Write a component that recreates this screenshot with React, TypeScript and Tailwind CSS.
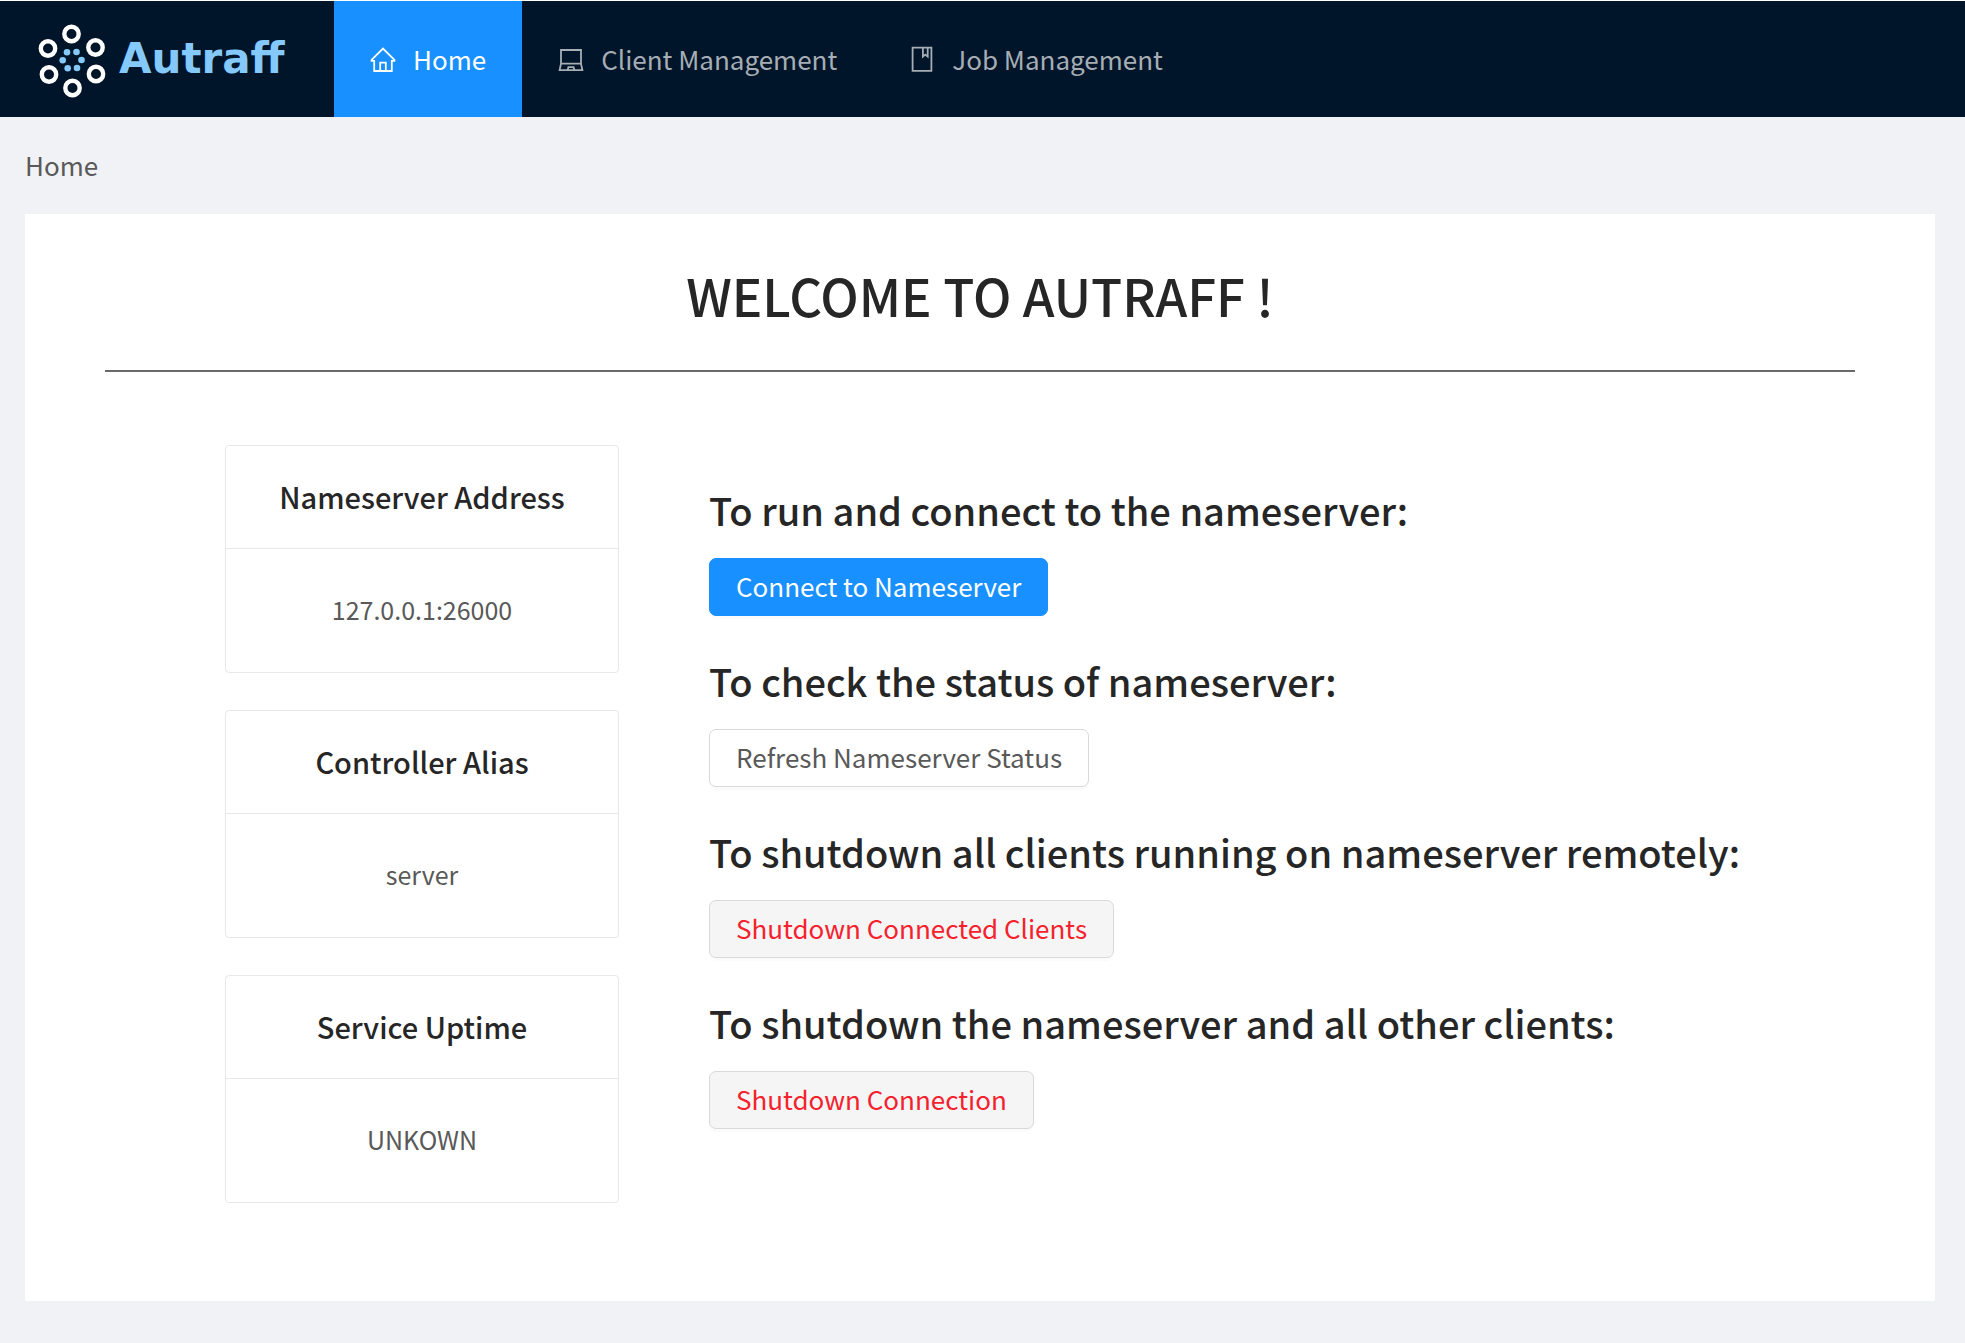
import type { ReactNode } from "react";

const font = "font-['Noto_Sans_CJK_SC','Noto_Sans',sans-serif]";

function Logo() {
  const rings = [
    [42.5, 23], [66.5, 36.5], [67, 63], [43.5, 77], [20, 63.5], [19, 37.5],
  ];
  const dots = [
    [38, 41.3], [47.5, 41], [52.5, 49], [48, 57], [38.7, 57.3], [33.7, 49.3],
  ];
  return (
    <a href="#home" aria-label="Autraff" className="flex w-[334px] shrink-0 items-center pl-[29px]">
      <svg width="90" height="96" viewBox="0 0 90 96" fill="none" aria-hidden="true">
        {rings.map(([x, y]) => (
          <circle key={`${x}-${y}`} cx={x} cy={y} r="7.2" stroke="#fff" strokeWidth="4.4" />
        ))}
        {dots.map(([x, y]) => (
          <circle key={`${x}-${y}`} cx={x} cy={y} r="3.3" fill="#85c9fb" />
        ))}
      </svg>
      <span className="font-['DejaVu_Sans',sans-serif] text-[42px] leading-[52px] font-bold text-[#85c9fb]">Autraff</span>
    </a>
  );
}

function HomeIcon() {
  return (
    <svg width="26" height="26" viewBox="0 0 26 26" fill="none" stroke="currentColor" strokeWidth="1.8" aria-hidden="true">
      <path d="M4.2 14.8H1.6v-1L13 2.6l11.4 11.2v1h-2.6V25H4.2Z" />
      <path d="M10.2 25v-8.4h5.6V25" />
    </svg>
  );
}

function LaptopIcon() {
  return (
    <svg width="26" height="26" viewBox="0 0 26 26" fill="none" stroke="currentColor" strokeWidth="1.8" aria-hidden="true">
      <path d="M3 4h20v13.6H3Z" />
      <path d="M3 17.6 1.6 24.2h22.8L23 17.6" />
      <path d="M9.6 24.2l.8-3h5.2l.8 3" />
    </svg>
  );
}

function BookIcon() {
  return (
    <svg width="26" height="26" viewBox="0 0 26 26" fill="none" stroke="currentColor" strokeWidth="1.8" aria-hidden="true">
      <path d="M3.6 1.6h18.8v23.2H3.6Z" />
      <path d="M13.9 1.6v9l2.4-2 2.4 2v-9" />
    </svg>
  );
}

function NavItem({ icon, label, active }: { icon: ReactNode; label: string; active?: boolean }) {
  return (
    <a
      href="#"
      aria-current={active ? "page" : undefined}
      className={`flex items-center gap-[17px] px-9 text-[26px] ${active ? "bg-[#1890ff] text-white" : "text-[#a6adb4]"}`}
    >
      {icon}
      <span className="pb-[2px]">{label}</span>
    </a>
  );
}

function InfoCard({ title, value }: { title: string; value: string }) {
  return (
    <section className="rounded-[4px] border border-[#e8e8e8] text-center">
      <h3 className="border-b border-[#e8e8e8] pt-[28px] pb-[30px] text-[29px] leading-[44px] font-medium text-[#262626]">{title}</h3>
      <p className="pt-[41px] pb-[44px] text-[25px] leading-[38px] text-[#595959]">{value}</p>
    </section>
  );
}

const buttonKinds = {
  primary: "border-[#1890ff] bg-[#1890ff] text-white",
  normal: "border-[#d9d9d9] bg-white text-[#595959]",
  danger: "border-[#d9d9d9] bg-[#f5f5f5] text-[#f5222d]",
};

function Action({ title, label, kind }: { title: string; label: string; kind: keyof typeof buttonKinds }) {
  return (
    <section>
      <h2 className="text-[38px] leading-[50px] font-medium text-[#262626]">{title}</h2>
      <button
        type="button"
        className={`mt-[23px] block h-[58px] rounded-[7px] border px-[26px] pb-[2px] text-[26px] leading-[38px] shadow-[0_3px_0_rgba(0,0,0,0.016)] ${buttonKinds[kind]}`}
      >
        {label}
      </button>
    </section>
  );
}

export default function App() {
  return (
    <div className={`flex min-h-screen flex-col border-t border-white bg-[#f0f2f5] ${font}`}>
      <header className="flex h-[116px] bg-[#001529]">
        <Logo />
        <nav className="flex">
          <NavItem active icon={<HomeIcon />} label="Home" />
          <NavItem icon={<LaptopIcon />} label="Client Management" />
          <NavItem icon={<BookIcon />} label="Job Management" />
        </nav>
      </header>
      <nav aria-label="Breadcrumb" className="px-[25px] pt-[28px] pb-[30px] text-[26px] leading-[39px] text-[#595959]">
        Home
      </nav>
      <main className="mr-[30px] mb-[42px] ml-[25px] flex-1 bg-white px-20 pt-[46px]">
        <h1 className="border-b-2 border-[#6a6a6a] pb-[40px] text-center text-[51px] leading-[70px] font-medium text-[#262626]">
          WELCOME TO AUTRAFF !
        </h1>
        <div className="flex gap-[90px] pt-[73px] pl-[120px]">
          <div className="flex w-[394px] shrink-0 flex-col gap-[37px]">
            <InfoCard title="Nameserver Address" value="127.0.0.1:26000" />
            <InfoCard title="Controller Alias" value="server" />
            <InfoCard title="Service Uptime" value="UNKOWN" />
          </div>
          <div className="flex flex-col gap-[40px] pt-[40px]">
            <Action title="To run and connect to the nameserver:" label="Connect to Nameserver" kind="primary" />
            <Action title="To check the status of nameserver:" label="Refresh Nameserver Status" kind="normal" />
            <Action title="To shutdown all clients running on nameserver remotely:" label="Shutdown Connected Clients" kind="danger" />
            <Action title="To shutdown the nameserver and all other clients:" label="Shutdown Connection" kind="danger" />
          </div>
        </div>
      </main>
    </div>
  );
}
